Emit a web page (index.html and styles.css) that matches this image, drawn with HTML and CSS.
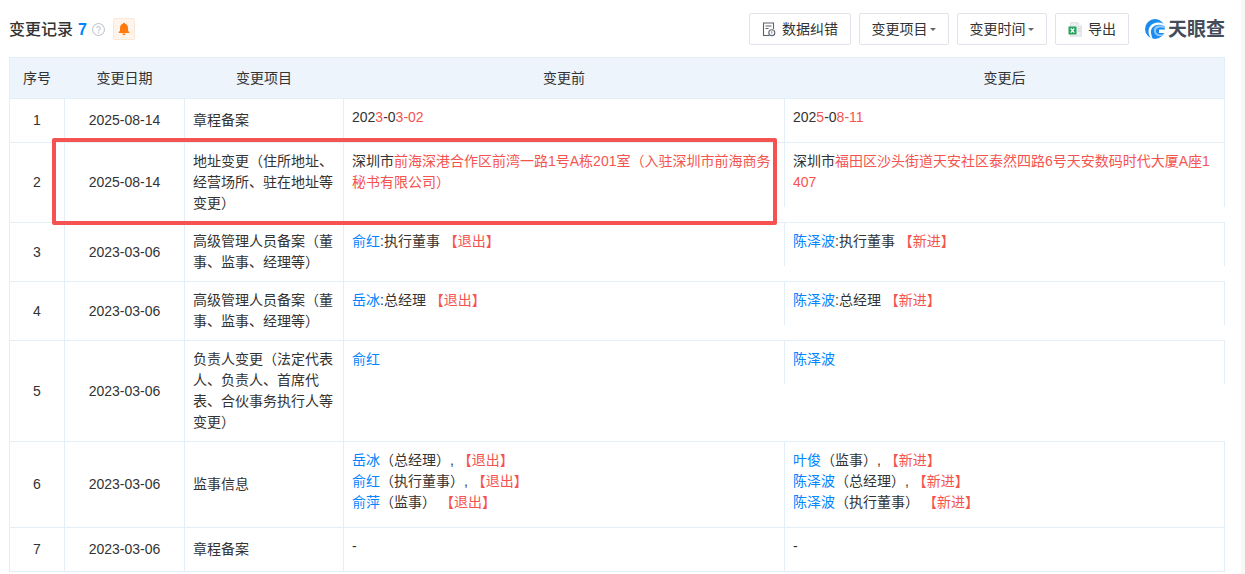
FILE: index.html
```html
<!DOCTYPE html>
<html lang="zh-CN">
<head>
<meta charset="utf-8">
<title>变更记录</title>
<link rel="stylesheet" href="styles.css">
</head>
<body>
<main class="page">
  <header class="toolbar">
    <h1 class="title">变更记录</h1>
    <span class="count">7</span>
    <svg class="help" viewBox="0 0 13 13" aria-hidden="true"><circle cx="6.5" cy="6.5" r="5.950" fill="none" stroke="#c3c8d0" stroke-width="1.100"/><path d="M4.700 5.200a1.800 1.800 0 1 1 2.700 1.600c-.6.4-.9.7-.9 1.400" fill="none" stroke="#c3c8d0" stroke-width="1.100"/><circle cx="6.500" cy="9.700" r=".7" fill="#c3c8d0"/></svg>
    <span class="bell"><svg viewBox="0 0 12 14" aria-hidden="true"><path d="M6 .8c.6 0 1 .4 1 .9 2 .5 3 2.100 3 4.100v2.600l1.300 1.900c.2.300 0 .7-.4.700H1.100c-.4 0-.6-.4-.4-.7L2 8.400V5.800c0-2 1-3.600 3-4.100 0-.5.400-.9 1-.9zM4.400 11.600h3.200C7.500 12.600 6.900 13.200 6 13.200s-1.500-.6-1.600-1.600z" fill="#ff7a0f"/></svg></span>
    <div class="actions">
      <button class="btn btn-fix"><svg class="ico" viewBox="0 0 14 15" aria-hidden="true"><path d="M7 13.500H1.500V1h10v6" fill="none" stroke="#59616e" stroke-width="1.100"/><path d="M3.500 4h6M3.500 6.500h3" stroke="#59616e" stroke-width="1"/><circle cx="9.800" cy="10.700" r="3" fill="none" stroke="#59616e" stroke-width="1.100"/><path d="M9.800 9.300v1.600M9.800 11.600v.6" stroke="#59616e" stroke-width=".9"/></svg>数据纠错</button>
      <button class="btn btn-menu">变更项目<i class="caret"></i></button>
      <button class="btn btn-menu">变更时间<i class="caret"></i></button>
      <button class="btn btn-export"><svg class="ico" viewBox="0 0 14 15" aria-hidden="true"><path d="M2.500.8h7.500l3.300 3.300v10.100H2.500z" fill="#eef0f0" stroke="#d5d8d8" stroke-width=".8"/><path d="M10 .8v3.300h3.300" fill="#fff" stroke="#d5d8d8" stroke-width=".8"/><rect x="9.500" y="6" width="3" height="1.200" fill="#d0d4d4"/><rect x="9.500" y="8.500" width="3" height="1.200" fill="#d0d4d4"/><rect x=".5" y="4.500" width="8" height="8" fill="#28a25f"/><path d="M2.800 6.500l3.400 4.200M6.200 6.500l-3.400 4.200" stroke="#fff" stroke-width="1.200"/></svg>导出</button>
      <div class="logo">
        <svg viewBox="0 0 20 20" aria-hidden="true"><circle cx="10" cy="10" r="10" fill="#1a8cf0"/><path d="M20 7.500C15 4.500 9.500 5.500 7 9c-1.500 2.200-1.400 5.500.5 10.500L6 19.500C3 15 2.800 10.500 5.200 7.200 8 3.500 14 2.500 19 5z" fill="#fff"/><path d="M20 9.500c-3.500-1.800-7-1.200-8.500.6-1 1.300-.6 3.600 1 4.700 1.500 1 3.500 1.100 5.500.2l-1 2c-2.500.8-5 .2-6.500-1.500-2-2.200-2.200-5.200-.7-7.200 1.800-2.200 6-3 10.500-1z" fill="#8cc8fa"/><path d="M14 10.500h6v3.500h-6z" fill="#fff"/></svg>
        <span class="logo-text">天眼查</span>
      </div>
    </div>
  </header>

  <table class="records">
    <colgroup>
      <col class="c-no"><col class="c-date"><col class="c-item"><col class="c-val"><col class="c-val">
    </colgroup>
    <thead>
      <tr><th>序号</th><th>变更日期</th><th>变更项目</th><th>变更前</th><th class="last">变更后</th></tr>
    </thead>
    <tbody>
      <tr>
        <td class="mid">1</td><td class="mid">2025-08-14</td><td class="item">章程备案</td>
        <td class="val">202<em>3</em>-0<em>3</em><em>-02</em></td>
        <td class="after"><div class="box">202<em>5</em>-0<em>8</em><em>-11</em></div></td>
      </tr>
      <tr>
        <td class="mid">2</td><td class="mid">2025-08-14</td><td class="item">地址变更（住所地址、经营场所、驻在地址等变更）</td>
        <td class="val">深圳市<em>前海深港合作区前湾一路1号A栋201室（入驻深圳市前海商务秘书有限公司）</em></td>
        <td class="after"><div class="box">深圳市<em>福田区沙头街道天安社区泰然四路6号天安数码时代大厦A座1407</em></div></td>
      </tr>
      <tr>
        <td class="mid">3</td><td class="mid">2023-03-06</td><td class="item">高级管理人员备案（董事、监事、经理等）</td>
        <td class="val"><a>俞红</a>:执行董事 <em>【退出】</em></td>
        <td class="after"><div class="box"><a>陈泽波</a>:执行董事 <em>【新进】</em></div></td>
      </tr>
      <tr>
        <td class="mid">4</td><td class="mid">2023-03-06</td><td class="item">高级管理人员备案（董事、监事、经理等）</td>
        <td class="val"><a>岳冰</a>:总经理 <em>【退出】</em></td>
        <td class="after"><div class="box"><a>陈泽波</a>:总经理 <em>【新进】</em></div></td>
      </tr>
      <tr>
        <td class="mid">5</td><td class="mid">2023-03-06</td><td class="item">负责人变更（法定代表人、负责人、首席代表、合伙事务执行人等变更）</td>
        <td class="val"><a>俞红</a></td>
        <td class="after"><div class="box"><a>陈泽波</a></div></td>
      </tr>
      <tr>
        <td class="mid">6</td><td class="mid">2023-03-06</td><td class="item">监事信息</td>
        <td class="val"><a>岳冰</a>（总经理）, <em>【退出】</em><br><a>俞红</a>（执行董事）, <em>【退出】</em><br><a>俞萍</a>（监事） <em>【退出】</em></td>
        <td class="after"><div class="box"><a>叶俊</a>（监事）, <em>【新进】</em><br><a>陈泽波</a>（总经理）, <em>【新进】</em><br><a>陈泽波</a>（执行董事） <em>【新进】</em></div></td>
      </tr>
      <tr>
        <td class="mid">7</td><td class="mid">2023-03-06</td><td class="item">章程备案</td>
        <td class="val">-</td>
        <td class="after"><div class="box">-</div></td>
      </tr>
    </tbody>
  </table>
  <div class="highlight"></div>
</main>
<aside class="track"></aside>
</body>
</html>
```
FILE: styles.css
```css
* { box-sizing: border-box; }
html, body { height: 100%; }
body {
  margin: 0;
  display: flex;
  overflow: hidden;
  background: #fff;
  color: #333;
  font-family: "Liberation Sans", "Noto Sans CJK SC", sans-serif;
  font-size: 14px;
  line-height: 21px;
}
.page {
  position: relative;
  flex: 1;
  min-width: 0;
  padding: 13px 16px 0 9px;
}
.track { width: 4px; background: #f7f7f7; }

.toolbar {
  display: flex;
  align-items: center;
  height: 32px;
  margin-bottom: 12px;
}
.title {
  margin: 0;
  font-size: 16px;
  font-weight: 500;
  color: #333;
}
.count {
  margin-left: 5px;
  font-size: 16px;
  font-weight: 700;
  color: #0084ff;
}
.help { width: 13px; height: 13px; margin-left: 5px; }
.bell {
  display: flex;
  align-items: center;
  justify-content: center;
  width: 22px;
  height: 22px;
  margin-left: 8px;
  background: #fff4eb;
  border: 1px solid #fde8d8;
  border-radius: 2px;
}
.bell svg { width: 12px; height: 14px; }

.actions {
  display: flex;
  align-items: center;
  gap: 8px;
  margin-left: auto;
}
.btn {
  display: flex;
  align-items: center;
  justify-content: center;
  height: 32px;
  padding: 0;
  background: #fff;
  border: 1px solid #e0e4ea;
  border-radius: 2px;
  color: #333;
  font: inherit;
}
.btn-fix { width: 102px; }
.btn-fix .ico { margin-right: 6px; }
.btn-menu { width: 90px; }
.btn-export { width: 74px; }
.btn-export .ico { margin-right: 6px; }
.ico { width: 14px; height: 15px; }
.caret {
  width: 0;
  height: 0;
  margin-left: 3px;
  border-left: 3px solid transparent;
  border-right: 3px solid transparent;
  border-top: 3px solid #666;
}
.logo {
  display: flex;
  align-items: center;
  margin-left: 8px;
}
.logo svg { width: 20px; height: 20px; }
.logo-text {
  margin-left: 3px;
  font-size: 19px;
  font-weight: 700;
  color: #444b59;
}

.records {
  width: 1216px;
  table-layout: fixed;
  border-collapse: separate;
  border-spacing: 0;
}
.c-no { width: 55px; }
.c-date { width: 120px; }
.c-item { width: 159px; }
.c-val { width: 441px; }

.records th {
  height: 42px;
  padding: 0;
  font-weight: 400;
  text-align: center;
  background: #edf4fc;
  border-top: 1px solid #e4eef6;
  border-bottom: 1px solid #e4eef6;
  border-left: 1px solid #e4eef6;
}
.records th:not(:first-child):not(.last) { border-left-color: #edf4fc; }
.records th.last { border-left-color: #edf4fc; border-right: 1px solid #e4eef6; }
.records td {
  padding: 0;
  vertical-align: middle;
  border-bottom: 1px solid #e4eef6;
  border-left: 1px solid #e4eef6;
}
.records td.mid { text-align: center; }
.records td.item { padding: 8px; }
.records td.val {
  vertical-align: top;
  padding: 8px 8px 14px;
  word-break: break-all;
}
.records td.after {
  vertical-align: top;
  border-left: 0;
}
.box {
  padding: 8px 8px 14px;
  border-left: 1px solid #e4eef6;
  border-right: 1px solid #e4eef6;
  word-break: break-all;
}
em { font-style: normal; color: #f4544f; }
a { color: #0084ff; }

.highlight {
  position: absolute;
  left: 52px;
  top: 138px;
  width: 725px;
  height: 87px;
  border: 4px solid #f55252;
  border-radius: 2px;
  pointer-events: none;
}
```
